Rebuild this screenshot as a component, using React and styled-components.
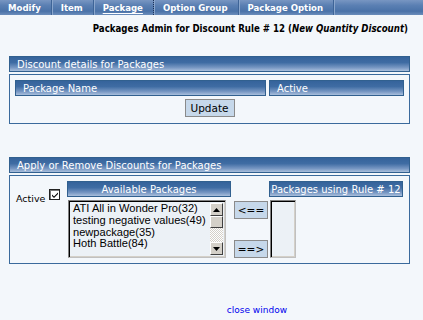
import React from "react";
import styled, { createGlobalStyle } from "styled-components";

const Global = createGlobalStyle`
  html, body { margin: 0; padding: 0; background: #f3f7fb; }
  body { font-family: "DejaVu Sans", Verdana, sans-serif; width: 423px; height: 320px; overflow: hidden; }
`;

const TabBar = styled.div`
  display: flex;
  height: 15px;
  background: linear-gradient(#7896c2 0%, #5b80b3 35%, #4a72a8 75%, #6b8dbb 100%);
  padding-left: 8px;
  box-sizing: border-box;
`;

const Tab = styled.div`
  display: flex;
  align-items: center;
  color: #fff;
  font-family: "DejaVu Sans Condensed", "DejaVu Sans", Verdana, sans-serif;
  font-stretch: condensed;
  font-weight: bold;
  font-size: 9.5px;
  padding: 0 10px 0 0;
  margin-right: 9px;
  border-right: 1px ${(p) => (p.dotted ? "dotted #1a2f55" : "solid #3e6497")};
  box-shadow: 1px 0 0 #8aa6cc;
  text-decoration: ${(p) => (p.active ? "underline" : "none")};
  text-underline-offset: 2px;
  white-space: nowrap;
`;

const Title = styled.div`
  text-align: right;
  padding: 8px 15px 0 0;
  height: 25px;
  box-sizing: border-box;
  font-family: "DejaVu Sans Condensed", "DejaVu Sans", Verdana, sans-serif;
  font-stretch: condensed;
  font-weight: bold;
  font-size: 9.6px;
  color: #000;
  em { font-style: italic; }
`;

const Section = styled.div`
  margin: ${(p) => p.top}px 13px 0 9px;
`;

const Header = styled.div`
  height: 16px;
  box-sizing: border-box;
  border: 1px solid #31608f;
  background: linear-gradient(#35639b 0%, #3f6ca3 40%, #7696c2 75%, #a9bfdc 100%);
  color: #fff;
  font-family: "DejaVu Sans", Verdana, sans-serif;
  font-size: 10px;
  display: flex;
  align-items: center;
  justify-content: ${(p) => (p.center ? "center" : "flex-start")};
  padding-left: ${(p) => (p.center ? 0 : 7)}px;
  white-space: nowrap;
  overflow: hidden;
`;

const Box = styled.div`
  margin-top: 2px;
  border: 1px solid #3a6a9c;
  box-sizing: border-box;
  height: ${(p) => p.h}px;
  padding: ${(p) => p.pad};
`;

const ColHeads = styled.div`
  display: grid;
  grid-template-columns: 251px 135px;
  gap: 3px;
`;

const ButtonRow = styled.div`
  display: flex;
  justify-content: center;
  margin-top: 3px;
`;

const Btn = styled.button`
  height: 18px;
  width: ${(p) => p.w}px;
  padding: 0;
  background: #c6d8ea;
  border: 1px solid #8a8a8a;
  font-family: "DejaVu Sans", Verdana, sans-serif;
  font-size: 10.5px;
  color: #000;
  display: flex;
  align-items: center;
  justify-content: center;
`;

const Grid = styled.div`
  display: grid;
  grid-template-columns: 51px 164px 38px 134px;
  grid-template-rows: 16px 60px;
  row-gap: 3px;
`;

const ActiveCell = styled.div`
  grid-row: 1 / span 2;
  display: flex;
  align-items: flex-start;
  padding-top: 12px;
  font-family: "DejaVu Sans", Verdana, sans-serif;
  font-size: 9.5px;
`;

const Check = styled.span`
  width: 9px;
  height: 9px;
  margin-left: 4px;
  margin-top: -4px;
  border: 1px solid #222;
  box-shadow: inset 1px 1px 0 #777;
  background: #fff;
  display: inline-flex;
  align-items: center;
  justify-content: center;
`;

const Spacer = styled.div``;

const ListBox = styled.div`
  width: ${(p) => p.w}px;
  height: 58px;
  box-sizing: border-box;
  border: 1px solid #c0c0c0;
  border-top-color: #808080;
  border-left-color: #808080;
  box-shadow: inset 1px 1px 0 #000, inset -1px -1px 0 #d4d0c8;
  background: #ecf1f6;
  display: flex;
  margin-left: ${(p) => p.ml || 0}px;
`;

const Items = styled.div`
  flex: 1;
  padding: 2px 0 0 4px;
  font-family: "Liberation Sans", Arial, sans-serif;
  font-size: 11.1px;
  line-height: 11.8px;
  color: #000;
  white-space: nowrap;
  overflow: hidden;
`;

const Scroll = styled.div`
  width: 13px;
  margin: 2px 2px 2px 0;
  display: flex;
  flex-direction: column;
  background: repeating-conic-gradient(#d4d0c8 0 25%, #fff 0 50%) 0 0 / 2px 2px;
`;

const SBtn = styled.div`
  height: 13px;
  background: #d4d0c8;
  border: 1px solid;
  border-color: #fff #404040 #404040 #fff;
  box-sizing: border-box;
  display: flex;
  align-items: center;
  justify-content: center;
`;

const Thumb = styled(SBtn)`
  height: 12px;
`;

const Fill = styled.div`
  flex: 1;
`;

const ArrowCol = styled.div`
  display: flex;
  flex-direction: column;
  justify-content: space-between;
  align-items: flex-end;
  padding: 1px 1px 2px 0;
`;

const Footer = styled.div`
  display: flex;
  justify-content: flex-end;
  padding: 41px 136px 0 0;
`;

const Link = styled.a`
  color: #0000ee;
  font-family: "DejaVu Sans", Verdana, sans-serif;
  font-size: 9px;
  text-decoration: none;
`;

const Tri = ({ up }) => (
  <svg width="7" height="4" viewBox="0 0 7 4">
    <polygon points={up ? "3.5,0 7,4 0,4" : "0,0 7,0 3.5,4"} fill="#000" />
  </svg>
);

export default function App() {
  return (
    <>
      <Global />
      <TabBar>
        <Tab>Modify</Tab>
        <Tab>Item</Tab>
        <Tab active dotted>Package</Tab>
        <Tab>Option Group</Tab>
        <Tab>Package Option</Tab>
      </TabBar>
      <Title>
        Packages Admin for Discount Rule # 12 (<em>New Quantity Discount</em>)
      </Title>
      <Section top={16}>
        <Header>Discount details for Packages</Header>
        <Box h={50} pad="5px 5px 0 5px">
          <ColHeads>
            <Header>Package Name</Header>
            <Header>Active</Header>
          </ColHeads>
          <ButtonRow>
            <Btn w={50}>Update</Btn>
          </ButtonRow>
        </Box>
      </Section>
      <Section top={33}>
        <Header>Apply or Remove Discounts for Packages</Header>
        <Box h={89} pad="5px 5px 0 6px">
          <Grid>
            <ActiveCell>
              Active
              <Check>
                <svg width="8" height="8" viewBox="0 0 8 8">
                  <path d="M1 3.5 L3 5.5 L7 1.5 L7 3 L3 7 L1 5 Z" fill="#000" />
                </svg>
              </Check>
            </ActiveCell>
            <Header center>Available Packages</Header>
            <Spacer />
            <Header center>Packages using Rule # 12</Header>
            <ListBox w={158} ml={1}>
              <Items>
                <div>ATI All in Wonder Pro(32)</div>
                <div>testing negative values(49)</div>
                <div>newpackage(35)</div>
                <div>Hoth Battle(84)</div>
              </Items>
              <Scroll>
                <SBtn><Tri up /></SBtn>
                <Thumb />
                <Fill />
                <SBtn><Tri /></SBtn>
              </Scroll>
            </ListBox>
            <ArrowCol>
              <Btn w={34}>&lt;==</Btn>
              <Btn w={34}>==&gt;</Btn>
            </ArrowCol>
            <ListBox w={26} ml={1} />
          </Grid>
        </Box>
      </Section>
      <Footer>
        <Link href="#">close window</Link>
      </Footer>
    </>
  );
}
